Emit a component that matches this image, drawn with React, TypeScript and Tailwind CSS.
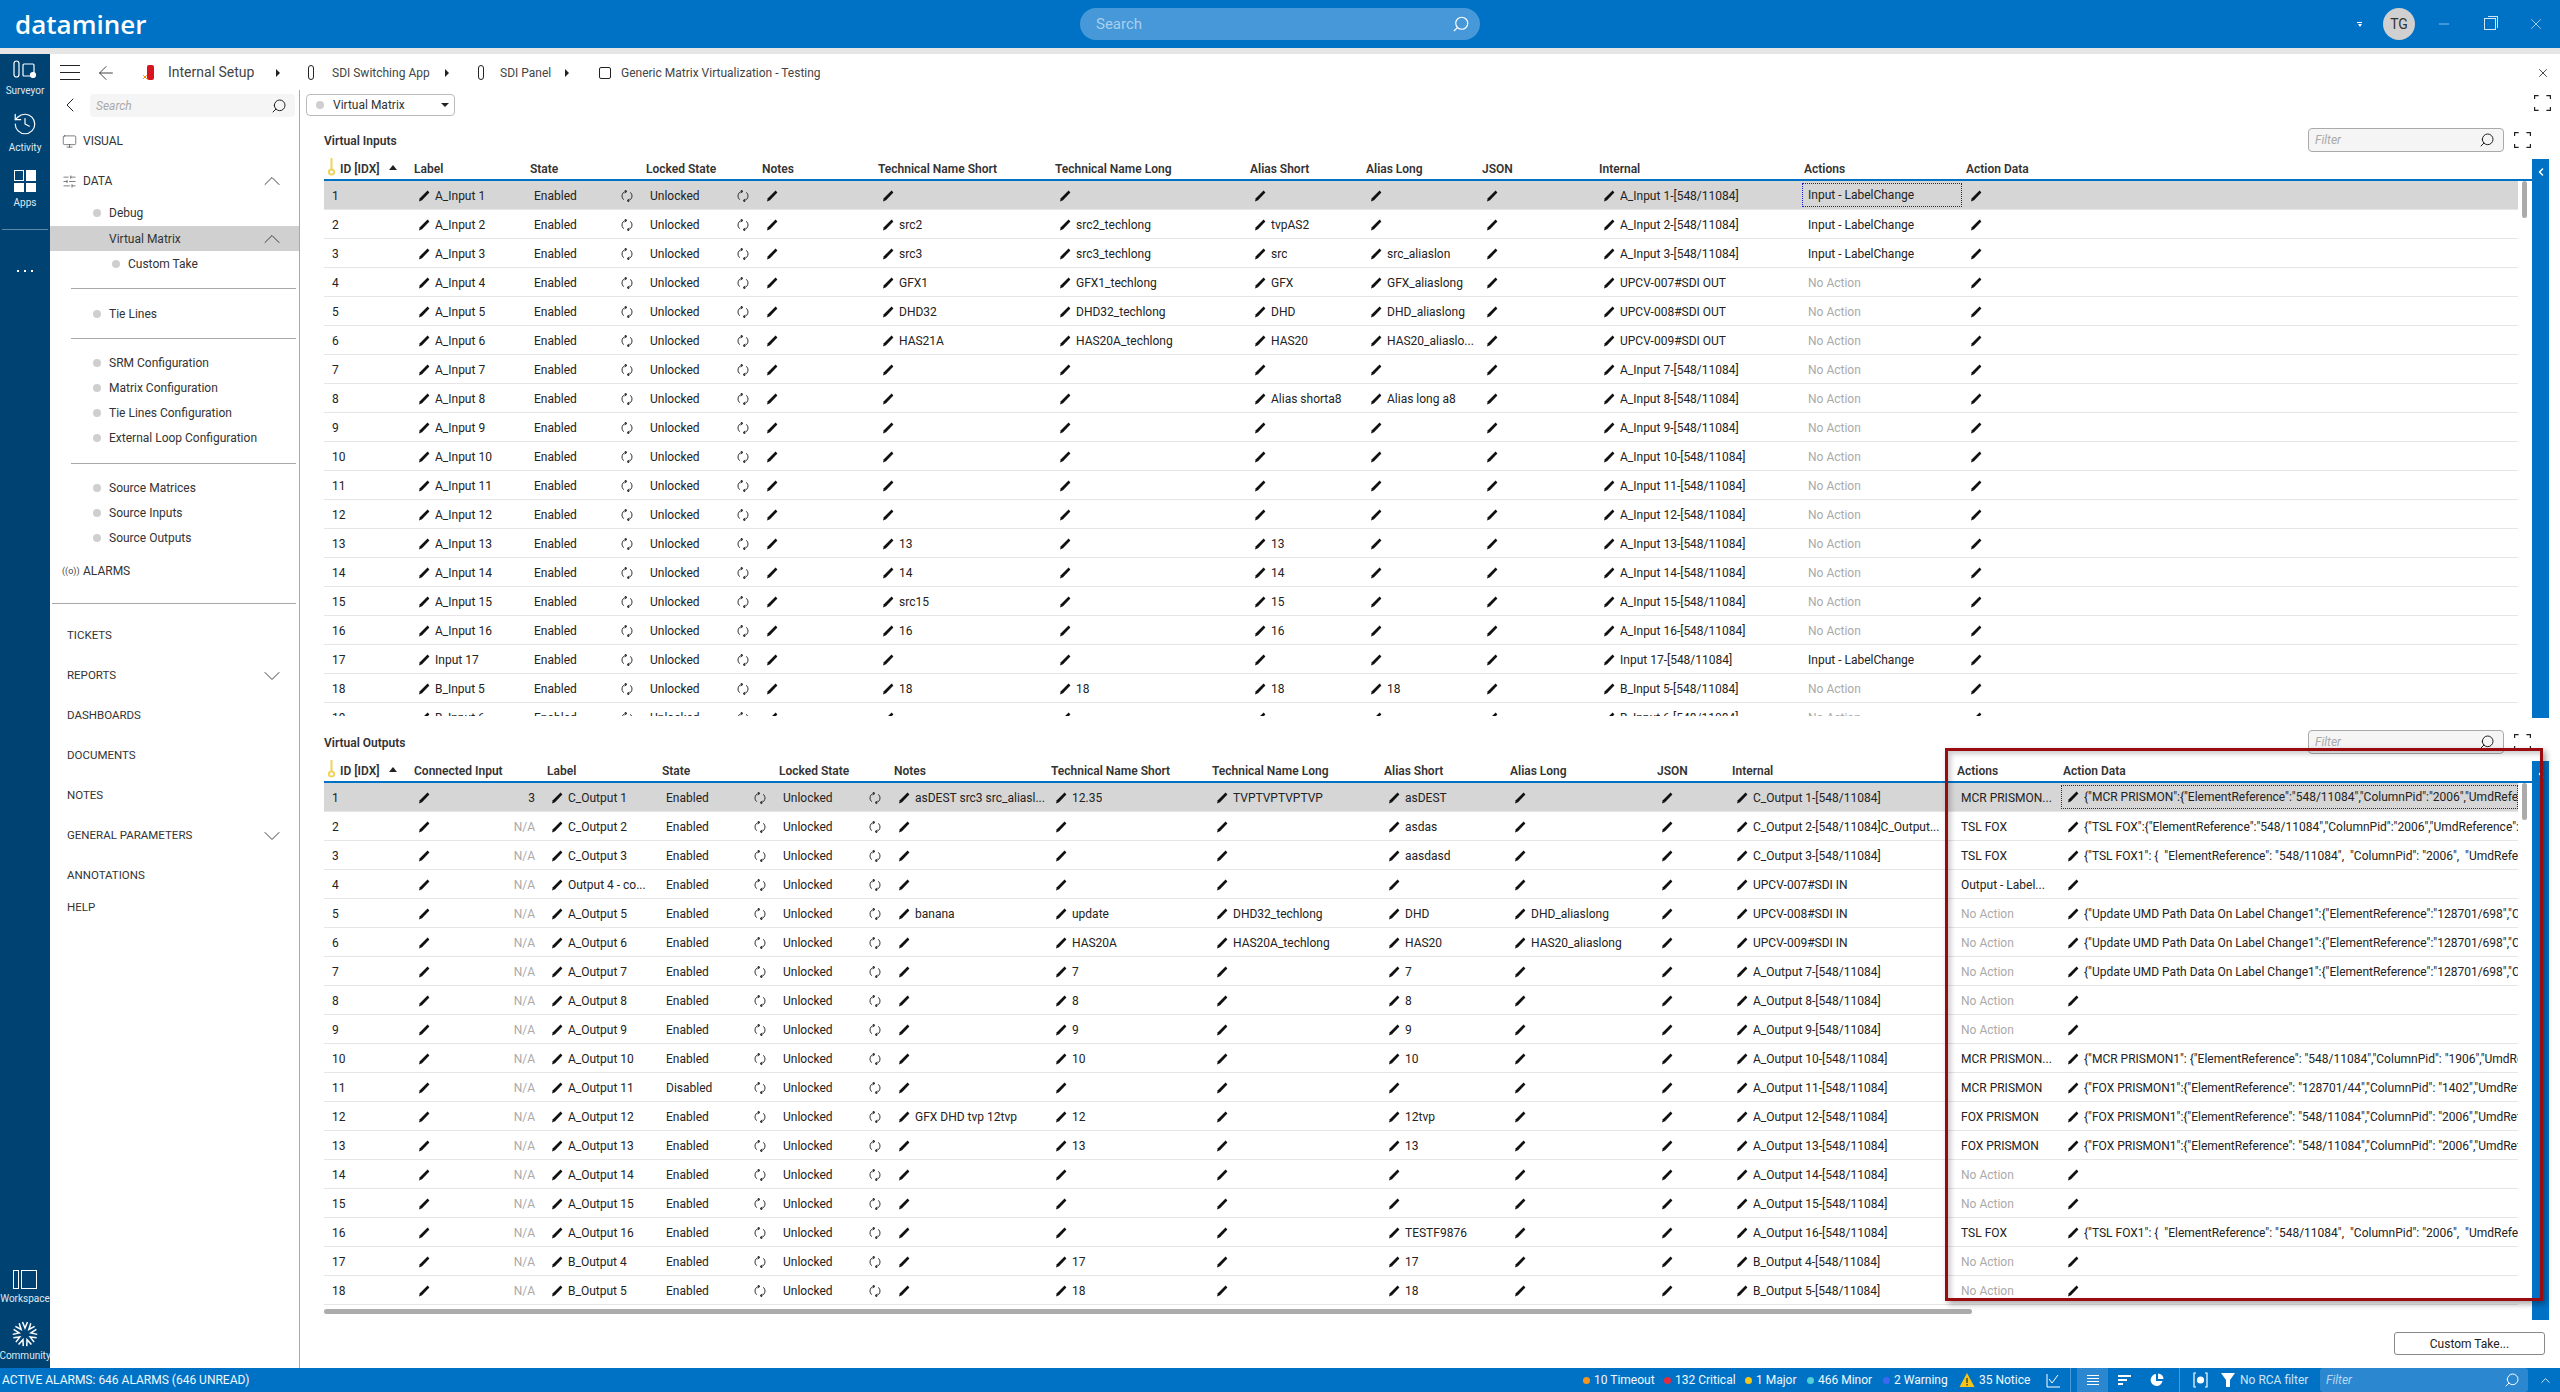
import {
  ArrowLeft,
  ChevronDown,
  ChevronLeft,
  ChevronUp,
  History,
  Minus,
  Monitor,
  Search,
  SlidersHorizontal,
  X,
} from "lucide-react";
import type { ReactNode } from "react";

const GRID_IN = "grid grid-cols-[86px_116px_116px_116px_116px_177px_195px_116px_116px_117px_205px_162px_556px]";
const GRID_OUT = "grid grid-cols-[86px_133px_115px_117px_115px_157px_161px_172px_126px_147px_75px_225px_106px_459px]";

function Pencil() {
  return (
    <svg viewBox="0 0 12 12" className="h-3 w-3 shrink-0" fill="#111">
      <path d="M9.6.6 11.4 2.4 4 10.2 1 11.4 1.8 8.2Z" />
    </svg>
  );
}

function Key() {
  return (
    <svg viewBox="0 0 7 18" className="h-[18px] w-[7px]" fill="none" stroke="#f1d35a" strokeWidth="2">
      <path d="M3.5 0v11" />
      <circle cx="3.5" cy="14" r="2.6" />
    </svg>
  );
}

function SortUp() {
  return <span className="ml-[9px] h-0 w-0 border-x-[4px] border-b-[5px] border-x-transparent border-b-[#222]" />;
}

function Caret() {
  return <span className="block h-0 w-0 border-y-[4px] border-l-[4px] border-y-transparent border-l-[#222]" />;
}

function Mirror({ className }: { className: string }) {
  return <Search className={`-scale-x-100 ${className}`} strokeWidth={1.5} />;
}

function Refresh() {
  return (
    <svg viewBox="0 0 14 12" className="h-3 w-[14px] shrink-0" fill="none" stroke="#333" strokeWidth="1">
      <path d="M6.5 1.4C3.8 1.4 2 3.4 2 6c0 1.6.7 2.9 1.9 3.7" />
      <path d="M7.5 10.6c2.7 0 4.5-2 4.5-4.6 0-1.6-.7-2.9-1.9-3.7" />
      <path d="M4.6 0 7 1.4 4.6 3M9.4 9 7 10.6 9.4 12" />
    </svg>
  );
}

function FullScreen() {
  return (
    <svg viewBox="0 0 17 16" className="h-4 w-[17px]" fill="none" stroke="#222" strokeWidth="1.2">
      <path d="M.6 4V.6h4M12.4.6h4V4M.6 12v3.4h4M12.4 15.4h4V12" />
    </svg>
  );
}

function Dot({ color = "bg-[#cfcfcf]" }: { color?: string }) {
  return <span className={`h-2 w-2 shrink-0 rounded-full ${color}`} />;
}

function Edit({ v, muted }: { v?: string; muted?: boolean }) {
  return (
    <div className={`flex h-full items-center gap-[5px] overflow-hidden whitespace-pre pl-2 ${muted ? "text-[#aaa]" : ""}`}>
      <Pencil />
      {v && <span className="overflow-hidden">{v}</span>}
    </div>
  );
}

function Plain({ v, muted }: { v: string; muted?: boolean }) {
  return <div className={`flex h-full items-center pl-2 ${muted ? "text-[#aaa]" : ""}`}>{v}</div>;
}

function Sync({ v }: { v: string }) {
  return (
    <div className="flex h-full items-center justify-between pl-2 pr-2">
      {v}
      <Refresh />
    </div>
  );
}

type InRow = [string, string?, string?, string?, string?, string?, string?];

const inRows: InRow[] = [
  ["A_Input 1", "", "", "", "", "A_Input 1-[548/11084]", "Input - LabelChange"],
  ["A_Input 2", "src2", "src2_techlong", "tvpAS2", "", "A_Input 2-[548/11084]", "Input - LabelChange"],
  ["A_Input 3", "src3", "src3_techlong", "src", "src_aliaslon", "A_Input 3-[548/11084]", "Input - LabelChange"],
  ["A_Input 4", "GFX1", "GFX1_techlong", "GFX", "GFX_aliaslong", "UPCV-007#SDI OUT"],
  ["A_Input 5", "DHD32", "DHD32_techlong", "DHD", "DHD_aliaslong", "UPCV-008#SDI OUT"],
  ["A_Input 6", "HAS21A", "HAS20A_techlong", "HAS20", "HAS20_aliaslo...", "UPCV-009#SDI OUT"],
  ["A_Input 7", "", "", "", "", "A_Input 7-[548/11084]"],
  ["A_Input 8", "", "", "Alias shorta8", "Alias long a8", "A_Input 8-[548/11084]"],
  ["A_Input 9", "", "", "", "", "A_Input 9-[548/11084]"],
  ["A_Input 10", "", "", "", "", "A_Input 10-[548/11084]"],
  ["A_Input 11", "", "", "", "", "A_Input 11-[548/11084]"],
  ["A_Input 12", "", "", "", "", "A_Input 12-[548/11084]"],
  ["A_Input 13", "13", "", "13", "", "A_Input 13-[548/11084]"],
  ["A_Input 14", "14", "", "14", "", "A_Input 14-[548/11084]"],
  ["A_Input 15", "src15", "", "15", "", "A_Input 15-[548/11084]"],
  ["A_Input 16", "16", "", "16", "", "A_Input 16-[548/11084]"],
  ["Input 17", "", "", "", "", "Input 17-[548/11084]", "Input - LabelChange"],
  ["B_Input 5", "18", "18", "18", "18", "B_Input 5-[548/11084]"],
  ["B_Input 6", "", "", "", "", "B_Input 6-[548/11084]"],
];

const UPDATE = '{"Update UMD Path Data On Label Change1":{"ElementReference":"128701/698","ColumnPid"';
const FOX = '{"FOX PRISMON1":{"ElementReference": "548/11084","ColumnPid": "2006","UmdReference"';
const TSL1 = '{"TSL FOX1": {  "ElementReference": "548/11084",  "ColumnPid": "2006",  "UmdReference"';

type OutRow = {
  label: string;
  conn?: string;
  state?: string;
  notes?: string;
  tns?: string;
  tnl?: string;
  as?: string;
  al?: string;
  internal?: string;
  action?: string;
  data?: string;
};

const outRows: OutRow[] = [
  { label: "C_Output 1", conn: "3", notes: "asDEST src3 src_aliasl...", tns: "12.35", tnl: "TVPTVPTVPTVP", as: "asDEST", action: "MCR PRISMON...", data: '{"MCR PRISMON":{"ElementReference":"548/11084","ColumnPid":"2006","UmdReference"' },
  { label: "C_Output 2", as: "asdas", internal: "C_Output 2-[548/11084]C_Output...", action: "TSL FOX", data: '{"TSL FOX":{"ElementReference":"548/11084","ColumnPid":"2006","UmdReference":"' },
  { label: "C_Output 3", as: "aasdasd", action: "TSL FOX", data: TSL1 },
  { label: "Output 4 - co...", internal: "UPCV-007#SDI IN", action: "Output - Label..." },
  { label: "A_Output 5", notes: "banana", tns: "update", tnl: "DHD32_techlong", as: "DHD", al: "DHD_aliaslong", internal: "UPCV-008#SDI IN", data: UPDATE },
  { label: "A_Output 6", tns: "HAS20A", tnl: "HAS20A_techlong", as: "HAS20", al: "HAS20_aliaslong", internal: "UPCV-009#SDI IN", data: UPDATE },
  { label: "A_Output 7", tns: "7", as: "7", data: UPDATE },
  { label: "A_Output 8", tns: "8", as: "8" },
  { label: "A_Output 9", tns: "9", as: "9" },
  { label: "A_Output 10", tns: "10", as: "10", action: "MCR PRISMON...", data: '{"MCR PRISMON1": {"ElementReference": "548/11084","ColumnPid": "1906","UmdReference"' },
  { label: "A_Output 11", state: "Disabled", action: "MCR PRISMON", data: '{"FOX PRISMON1":{"ElementReference": "128701/44","ColumnPid": "1402","UmdReference"' },
  { label: "A_Output 12", notes: "GFX DHD tvp 12tvp", tns: "12", as: "12tvp", action: "FOX PRISMON", data: FOX },
  { label: "A_Output 13", tns: "13", as: "13", action: "FOX PRISMON", data: FOX },
  { label: "A_Output 14" },
  { label: "A_Output 15" },
  { label: "A_Output 16", as: "TESTF9876", action: "TSL FOX", data: TSL1 },
  { label: "B_Output 4", tns: "17", as: "17" },
  { label: "B_Output 5", tns: "18", as: "18" },
];

const inHeads = ["Label", "State", "Locked State", "Notes", "Technical Name Short", "Technical Name Long", "Alias Short", "Alias Long", "JSON", "Internal", "Actions", "Action Data"];
const outHeads = ["Connected Input", ...inHeads];

function HeadRow({ grid, heads }: { grid: string; heads: string[] }) {
  return (
    <div className={`${grid} h-[29px] w-[2208px] border-b-2 border-[#0072c6] pt-[6px] font-semibold text-[#333]`}>
      <div className="-mt-[3px] flex items-center pl-1">
        <Key />
        <span className="ml-[5px] mt-[3px]">ID [IDX]</span>
        <SortUp />
      </div>
      {heads.map((h) => (
        <div key={h} className="flex items-center pl-1">
          {h}
        </div>
      ))}
    </div>
  );
}

function InputsTable() {
  return (
    <div className="h-[564px] overflow-hidden">
      <HeadRow grid={GRID_IN} heads={inHeads} />
      {inRows.map(([label, tns, tnl, as, al, internal, action], i) => (
        <div key={label} className={`${GRID_IN} h-[29px] w-[2194px] border-b border-[#e6e6e6] pt-px ${i === 0 ? "bg-[#d6d6d6]" : ""}`}>
          <Plain v={String(i + 1)} />
          <Edit v={label} />
          <Sync v="Enabled" />
          <Sync v="Unlocked" />
          <Edit />
          <Edit v={tns} />
          <Edit v={tnl} />
          <Edit v={as} />
          <Edit v={al} />
          <Edit />
          <Edit v={internal} />
          {i === 0 ? (
            <div className="pl-[2px]">
              <div className="mt-px flex h-[24px] items-center border border-dotted border-[#1a1ad0] pl-[5px]">{action}</div>
            </div>
          ) : (
            <Plain v={action ?? "No Action"} muted={!action} />
          )}
          <Edit />
        </div>
      ))}
    </div>
  );
}

function OutputsTable() {
  return (
    <div>
      <HeadRow grid={GRID_OUT} heads={outHeads} />
      {outRows.map((r, i) => (
        <div key={r.label} className={`${GRID_OUT} h-[29px] w-[2194px] border-b border-[#e6e6e6] pt-px ${i === 0 ? "bg-[#d6d6d6]" : ""}`}>
          <Plain v={String(i + 1)} />
          <div className="flex h-full items-center justify-between px-2">
            <Pencil />
            <span className={r.conn ? "" : "text-[#aaa]"}>{r.conn ?? "N/A"}</span>
          </div>
          <Edit v={r.label} />
          <Sync v={r.state ?? "Enabled"} />
          <Sync v="Unlocked" />
          <Edit v={r.notes} />
          <Edit v={r.tns} />
          <Edit v={r.tnl} />
          <Edit v={r.as} />
          <Edit v={r.al} />
          <Edit />
          <Edit v={r.internal ?? `${r.label}-[548/11084]`} />
          <Plain v={r.action ?? "No Action"} muted={!r.action} />
          {i === 0 ? (
            <div className="overflow-hidden pl-[2px]">
              <div className="mt-px flex h-[24px] items-center gap-[5px] overflow-hidden whitespace-pre border border-dotted border-[#1a1ad0] pl-[5px]">
                <Pencil />
                {r.data}
              </div>
            </div>
          ) : (
            <Edit v={r.data} />
          )}
        </div>
      ))}
      <div className="mt-[4px] h-[5px] w-[1648px] rounded-full bg-[#ababab]" />
    </div>
  );
}

function BlueBar() {
  return (
    <div className="mt-[7px] flex h-[559px] w-[17px] justify-center bg-[#0072c6] pt-[7px]">
      <ChevronLeft className="h-3 w-3 text-white" strokeWidth={3} />
    </div>
  );
}

function Section({ title, children }: { title: string; children: ReactNode }) {
  return (
    <div className="flex h-[602px] flex-col">
      <div className="flex h-[24px] items-center justify-between pr-[29px]">
        <div className="pt-[2px] font-semibold text-[#333]">{title}</div>
        <div className="flex items-center gap-[10px]">
          <div className="flex h-[24px] w-[196px] items-center justify-between rounded-[4px] border border-[#aaa] bg-[#f5f5f5] pl-[6px] pr-[8px] italic text-[#aaa]">
            Filter
            <Mirror className="h-4 w-4 text-[#222]" />
          </div>
          <FullScreen />
        </div>
      </div>
      <div className="flex">
        <div className="relative w-[2208px]">
          {children}
          <div className="absolute right-[5px] top-[29px] h-[37px] w-[5px] rounded-full bg-[#ababab]" />
        </div>
        <BlueBar />
      </div>
    </div>
  );
}

function NavTile({ icon, label, className }: { icon: ReactNode; label: string; className: string }) {
  return (
    <div className={`flex flex-col items-center ${className}`}>
      {icon}
      <span className="text-[10px] leading-[13px] text-[#dfe9f2]">{label}</span>
    </div>
  );
}

function LeftNav() {
  return (
    <div className="flex w-[50px] shrink-0 flex-col items-center bg-[#004272] pt-[6px] text-white">
      <NavTile
        className="mt-0"
        label="Surveyor"
        icon={
          <svg viewBox="0 0 24 18" className="mb-[6px] h-[18px] w-[24px]" fill="none" stroke="#fff" strokeWidth="1.2">
            <rect x="1" y="1" width="5" height="16" rx="2.5" />
            <rect x="10" y="4" width="11" height="12" rx="1" />
            <circle cx="20" cy="15" r="2.5" fill="#fff" />
          </svg>
        }
      />
      <NavTile className="mt-[14px]" label="Activity" icon={<History className="mb-[4px] h-[26px] w-[26px]" strokeWidth={1.1} />} />
      <NavTile
        className="mt-[16px]"
        label="Apps"
        icon={
          <div className="mb-[4px] grid h-[22px] w-[22px] grid-cols-2 gap-[2px]">
            <span className="border border-white" />
            <span className="bg-white" />
            <span className="bg-white" />
            <span className="bg-white" />
          </div>
        }
      />
      <div className="mt-[20px] h-px w-[46px] bg-[#5c87a6]" />
      <div className="mt-[40px] flex gap-[5px]">
        <span className="h-[2px] w-[2px] bg-white" />
        <span className="h-[2px] w-[2px] bg-white" />
        <span className="h-[2px] w-[2px] bg-white" />
      </div>
      <NavTile
        className="mt-auto"
        label="Workspace"
        icon={
          <div className="mb-[3px] flex h-[19px] w-[24px] gap-[2px]">
            <span className="w-[6px] border-[1.5px] border-white" />
            <span className="flex-1 border-[1.5px] border-white" />
          </div>
        }
      />
      <NavTile
        className="mb-[6px] mt-[16px]"
        label="Community"
        icon={
          <svg viewBox="0 0 26 26" className="mb-[2px] h-[26px] w-[26px]" stroke="#fff" strokeWidth="1.5" fill="none">
            {[0, 40, 80, 120, 160, 200, 240, 280, 320].map((a) => (
              <path key={a} d="M10.5 1 13 7 15.5 1" transform={`rotate(${a} 13 13)`} />
            ))}
          </svg>
        }
      />
    </div>
  );
}

function Item({ label, sub }: { label: string; sub?: boolean }) {
  return (
    <div className={`flex h-[25px] items-center gap-2 text-[#333] ${sub ? "pl-[62px]" : "pl-[43px]"}`}>
      <Dot />
      {label}
    </div>
  );
}

function Rule({ className }: { className: string }) {
  return <div className={`h-px bg-[#a8a8a8] ${className}`} />;
}

function TopItem({ label, more }: { label: string; more?: boolean }) {
  return (
    <div className="flex h-[40px] items-center justify-between pl-[17px] pr-[13px] text-[11.5px] text-[#333]">
      {label}
      {more && <ChevronDown className="h-7 w-7" strokeWidth={0.8} />}
    </div>
  );
}

function Sidebar() {
  return (
    <div className="w-[250px] shrink-0 border-r border-[#a8a8a8]">
      <div className="flex h-[27px] items-end pl-[8px]">
        <ChevronLeft className="h-6 w-6" strokeWidth={1} />
        <div className="ml-[8px] flex h-[23px] w-[205px] items-center justify-between rounded-[4px] bg-[#f5f5f5] pl-[6px] pr-[8px] italic text-[#aaa]">
          Search
          <Mirror className="h-4 w-4 text-[#222]" />
        </div>
      </div>
      <div className="mt-[12px] flex h-[24px] items-center gap-[6px] pl-[12px] text-[#333]">
        <Monitor className="h-[15px] w-[15px]" strokeWidth={1} />
        VISUAL
      </div>
      <div className="mt-[16px] flex h-[24px] items-center gap-[6px] pl-[12px] pr-[13px] text-[#333]">
        <SlidersHorizontal className="h-[15px] w-[15px]" strokeWidth={1} />
        DATA
        <ChevronUp className="ml-auto h-7 w-7" strokeWidth={0.8} />
      </div>
      <div className="mt-[7px] mb-px">
        <Item label="Debug" />
      </div>
      <div className="flex h-[25px] items-center justify-between bg-[#d0d0d0] pl-[59px] pr-[13px] text-[#333]">
        Virtual Matrix
        <ChevronUp className="h-7 w-7" strokeWidth={0.8} />
      </div>
      <Item label="Custom Take" sub />
      <Rule className="ml-[21px] mr-[3px] mt-[12px]" />
      <div className="mt-[12px]">
        <Item label="Tie Lines" />
      </div>
      <Rule className="ml-[21px] mr-[3px] mt-[12px]" />
      <div className="mt-[11px]">
        <Item label="SRM Configuration" />
        <Item label="Matrix Configuration" />
        <Item label="Tie Lines Configuration" />
        <Item label="External Loop Configuration" />
      </div>
      <Rule className="ml-[21px] mr-[3px] mt-[13px]" />
      <div className="mt-[11px]">
        <Item label="Source Matrices" />
        <Item label="Source Inputs" />
        <Item label="Source Outputs" />
      </div>
      <div className="mt-[9px] flex h-[24px] items-center gap-[5px] pl-[12px] text-[#333]">
        <span className="w-[16px] text-[9px] leading-none text-[#444]">((o))</span>
        ALARMS
      </div>
      <Rule className="ml-[2px] mr-[3px] mt-[20px]" />
      <div className="mt-[12px]">
        <TopItem label="TICKETS" />
        <TopItem label="REPORTS" more />
        <TopItem label="DASHBOARDS" />
        <TopItem label="DOCUMENTS" />
        <TopItem label="NOTES" />
        <TopItem label="GENERAL PARAMETERS" more />
        <TopItem label="ANNOTATIONS" />
      </div>
      <div className="flex h-[24px] items-center pl-[17px] text-[11.5px] text-[#333]">HELP</div>
    </div>
  );
}

function Crumbs() {
  const outline = "border border-[#222] rounded-full h-[15px] w-[6px]";
  return (
    <div className="flex h-[36px] shrink-0 items-center pl-[10px] pr-[10px] pt-px text-[#444]">
      <div className="flex h-[15px] w-[20px] flex-col justify-between">
        <span className="h-px bg-[#222]" />
        <span className="h-px bg-[#222]" />
        <span className="h-px bg-[#222]" />
      </div>
      <ArrowLeft className="ml-[15px] h-[22px] w-[22px] text-[#333]" strokeWidth={1} />
      <div className="relative ml-[30px] h-[15px] w-[7px] rounded-[2px] bg-[#d8151f]">
        <X className="absolute -left-[5px] bottom-0 h-[6px] w-[6px] text-[#f08a00]" strokeWidth={4} />
      </div>
      <span className="ml-[14px] w-[85px] whitespace-nowrap text-[14px]">Internal Setup</span>
      <div className="ml-[23px]">
        <Caret />
      </div>
      <span className={`ml-[28px] ${outline}`} />
      <span className="ml-[18px] w-[100px] whitespace-nowrap">SDI Switching App</span>
      <div className="ml-[13px]">
        <Caret />
      </div>
      <span className={`ml-[29px] ${outline}`} />
      <span className="ml-[16px] w-[50px] whitespace-nowrap">SDI Panel</span>
      <div className="ml-[15px]">
        <Caret />
      </div>
      <span className="ml-[30px] h-[12px] w-[12px] rounded-[2px] border border-[#222]" />
      <span className="ml-[10px] whitespace-nowrap">Generic Matrix Virtualization - Testing</span>
      <X className="ml-auto h-[14px] w-[14px] text-[#222]" strokeWidth={1.4} />
    </div>
  );
}

function Content() {
  return (
    <div className="flex-1 pl-[24px]">
      <div className="-ml-[18px] flex h-[38px] justify-between pr-[9px] pt-[4px]">
        <div className="flex h-[22px] w-[149px] items-center rounded-[4px] border border-[#bbb] pl-[9px] pr-[5px] text-[#333]">
          <Dot />
          <span className="ml-[9px]">Virtual Matrix</span>
          <span className="ml-auto h-0 w-0 border-x-[4px] border-t-[4px] border-x-transparent border-t-[#222]" />
        </div>
        <div className="pt-px">
          <FullScreen />
        </div>
      </div>
      <Section title="Virtual Inputs">
        <InputsTable />
      </Section>
      <Section title="Virtual Outputs">
        <OutputsTable />
      </Section>
      <div className="flex justify-end pr-[15px]">
        <button className="h-[23px] w-[151px] rounded-[3px] border border-[#888] text-[#222]">Custom Take...</button>
      </div>
    </div>
  );
}

function Alarm({ color, label, w }: { color: string; label: string; w: string }) {
  return (
    <div className={`flex items-center gap-[4px] ${w}`}>
      <span className={`h-[7px] w-[7px] shrink-0 rounded-full ${color}`} />
      <span className="whitespace-nowrap">{label}</span>
    </div>
  );
}

function StatusBar() {
  return (
    <div className="flex h-[24px] shrink-0 items-center bg-[#0072c6] text-[#f2f8fc]">
      <div className="w-[1583px] whitespace-nowrap pl-[2px]">ACTIVE ALARMS: 646 ALARMS (646 UNREAD)</div>
      <Alarm color="bg-[#f7941d]" label="10 Timeout" w="w-[81px]" />
      <Alarm color="bg-[#e8283c]" label="132 Critical" w="w-[81px]" />
      <Alarm color="bg-[#f5c518]" label="1 Major" w="w-[62px]" />
      <Alarm color="bg-[#4fd0d8]" label="466 Minor" w="w-[76px]" />
      <Alarm color="bg-[#3f66f0]" label="2 Warning" w="w-[76px]" />
      <div className="flex w-[85px] items-center gap-[4px]">
        <svg viewBox="0 0 16 16" className="h-4 w-4">
          <path d="M8 1 15.5 15H.5Z" fill="#f5c518" />
          <path d="M8 6v5M8 12v1.5" stroke="#333" strokeWidth="1.3" />
        </svg>
        <span className="whitespace-nowrap">35 Notice</span>
      </div>
      <svg viewBox="0 0 15 15" className="ml-[2px] h-[15px] w-[15px]" fill="none" stroke="#fff" strokeWidth="1">
        <path d="M1 1v13h13M3 6l3 4 6-8" />
      </svg>
      <span className="ml-[9px] h-full w-px bg-[#4c9bd6]" />
      <div className="ml-[6px] flex h-full w-[31px] flex-col items-center justify-center gap-[2px] bg-[#2a87d0]">
        <span className="h-px w-[12px] bg-white" />
        <span className="h-px w-[12px] bg-white" />
        <span className="h-px w-[12px] bg-white" />
        <span className="h-px w-[12px] bg-white" />
      </div>
      <div className="ml-[10px] flex w-[13px] flex-col gap-[2px]">
        <span className="h-[2px] w-[13px] bg-white" />
        <span className="h-[2px] w-[9px] bg-white" />
        <span className="h-[2px] w-[5px] bg-white" />
      </div>
      <svg viewBox="0 0 14 14" className="ml-[19px] h-[14px] w-[14px]" fill="#fff">
        <path d="M6 1a6 6 0 1 0 6.5 7H6Z" />
        <path d="M8 .5V6h5.5A5.5 5.5 0 0 0 8 .5Z" />
      </svg>
      <span className="ml-[15px] h-full w-px bg-[#4c9bd6]" />
      <svg viewBox="0 0 15 16" className="ml-[13px] h-4 w-[15px]" fill="none" stroke="#fff" strokeWidth="1.2">
        <path d="M3 1 H1V15H3M12 1h2v14h-2" />
        <circle cx="7.5" cy="8" r="3" fill="#fff" />
      </svg>
      <svg viewBox="0 0 14 16" className="ml-[13px] h-4 w-[14px]" fill="#fff">
        <path d="M0 1h14L9 8v7H5V8Z" />
      </svg>
      <span className="ml-[5px] w-[80px] whitespace-nowrap text-[#cfe4f5]">No RCA filter</span>
      <div className="flex h-full w-[208px] items-center justify-between rounded-[3px] bg-[#2a87d0] pl-[6px] pr-[8px] italic text-[#b7d8f1]">
        Filter
        <Mirror className="h-4 w-4 text-white" />
      </div>
      <ChevronUp className="ml-[10px] h-[15px] w-[15px] text-white" strokeWidth={1.3} />
    </div>
  );
}

export default function App() {
  return (
    <div className="relative flex h-[1392px] w-[2560px] flex-col overflow-hidden bg-white font-['Roboto',sans-serif] text-[12px] text-[#222]">
      <div className="flex h-[48px] shrink-0 items-center bg-[#0072c6] text-white">
        <div className="w-[1080px] pl-[15px] font-['Open_Sans',sans-serif] text-[26px] font-semibold leading-none">dataminer</div>
        <div className="flex h-[32px] w-[400px] items-center justify-between rounded-full bg-[#4698d8] pl-[16px] pr-[10px] text-[15px] text-[#a8cfee]">
          Search
          <Mirror className="h-[18px] w-[18px] text-white" />
        </div>
        <div className="ml-[877px] flex w-[5px] flex-col items-center gap-px">
          <span className="h-px w-[5px] bg-white" />
          <span className="h-0 w-0 border-x-[2.5px] border-t-[3px] border-x-transparent border-t-white" />
        </div>
        <div className="ml-[21px] flex h-[32px] w-[32px] items-center justify-center rounded-full bg-[#d0d0d0] text-[14px] text-[#333]">TG</div>
        <Minus className="ml-[21px] h-[16px] w-[16px] text-[#cfe4f5]" strokeWidth={1} />
        <div className="relative ml-[32px] h-[12px] w-[12px] border border-[#cfe4f5]">
          <span className="absolute -right-[3px] -top-[3px] h-[12px] w-[10px] border-r border-t border-[#cfe4f5]" />
        </div>
        <X className="ml-[31px] h-[18px] w-[18px] text-[#cfe4f5]" strokeWidth={1} />
      </div>
      <div className="h-[6px] shrink-0 bg-[#e6e6e6]" />
      <div className="flex min-h-0 flex-1">
        <LeftNav />
        <div className="flex min-w-0 flex-1 flex-col">
          <Crumbs />
          <div className="flex min-h-0 flex-1">
            <Sidebar />
            <Content />
          </div>
        </div>
      </div>
      <StatusBar />
      <div className="pointer-events-none absolute left-[1945px] top-[748px] h-[553px] w-[598px] border-[3px] border-[#9a0b0f] shadow-[3px_3px_6px_rgba(0,0,0,0.35),inset_3px_3px_5px_rgba(0,0,0,0.2)]" />
    </div>
  );
}
